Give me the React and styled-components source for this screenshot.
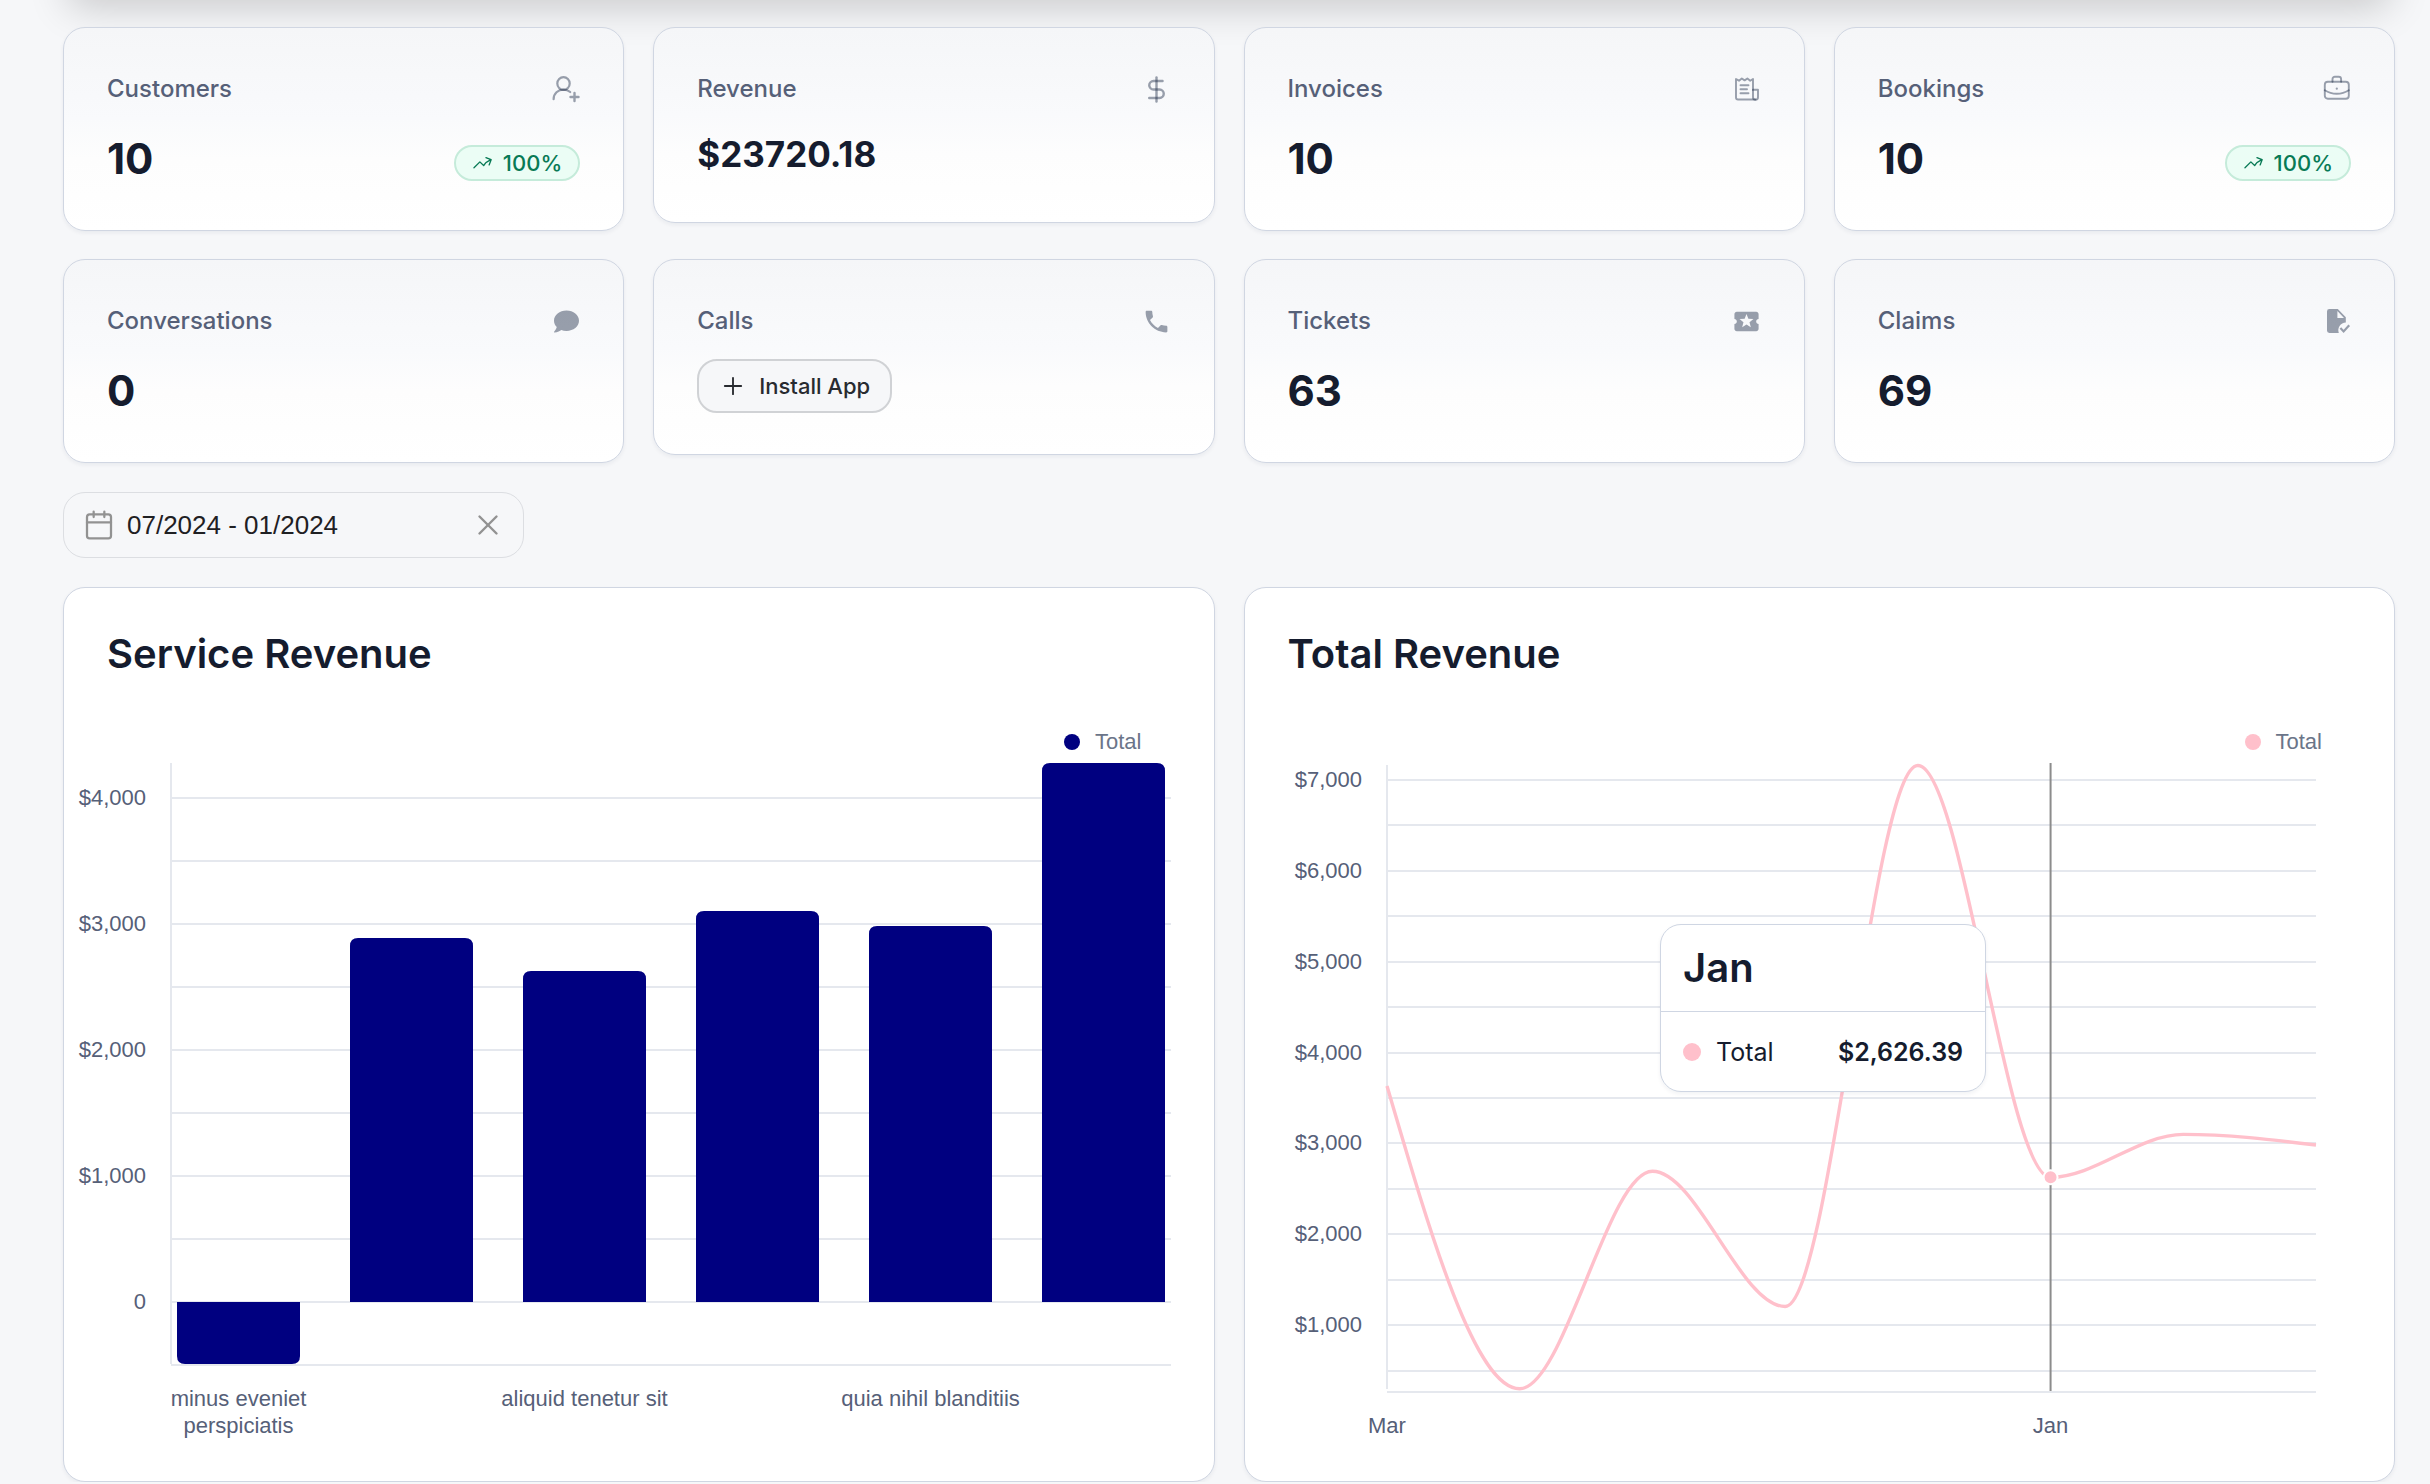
import React, { useLayoutEffect, useRef, useState } from 'react'

import styled, { createGlobalStyle } from 'styled-components'
import { Calendar, DollarSign, Plus, X } from 'lucide-react'
import { FaComment } from 'react-icons/fa'
import { HiArrowTrendingUp } from 'react-icons/hi2'
import { MdLocalPlay, MdPhone } from 'react-icons/md'

const NAVY = '#000080'
const PINK = '#ffc0cb'
const CHART_HEIGHT = 697

const serviceRevenue = [
  { name: ['minus eveniet', 'perspiciatis'], total: -490 },
  { name: [], total: 2889 },
  { name: ['aliquid tenetur sit'], total: 2626 },
  { name: [], total: 3102 },
  { name: ['quia nihil blanditiis'], total: 2985 },
  { name: [], total: 4278 },
]

const totalRevenue = [
  { name: 'Mar', total: 3632 },
  { name: '', total: 300 },
  { name: '', total: 2693 },
  { name: '', total: 1205 },
  { name: '', total: 7160 },
  { name: 'Jan', total: 2626.39 },
  { name: '', total: 3100 },
  { name: '', total: 2983 },
]

const formatTick = (value) => (value === 0 ? '0' : '$' + value.toLocaleString('en-US'))

const range = (from, to, step) => {
  const out = []
  for (let v = from; v <= to; v += step) out.push(v)
  return out
}

// current width of an element, kept up to date when the window changes
const useWidth = () => {
  const ref = useRef(null)
  const [width, setWidth] = useState(0)

  useLayoutEffect(() => {
    const measure = () => setWidth(ref.current.clientWidth)
    const observer = new ResizeObserver(measure)
    measure()
    observer.observe(ref.current)
    return () => observer.disconnect()
  }, [])

  return [ref, width]
}

// monotone cubic through the points, so the line never overshoots its data
const monotonePath = (points) => {
  const slopes = points.slice(1).map((p, i) => (p.y - points[i].y) / (p.x - points[i].x))
  const tangents = points.map((p, i) => {
    if (i === 0 || i === points.length - 1) return null
    const a = slopes[i - 1]
    const b = slopes[i]
    if (a * b <= 0) return 0
    return Math.sign(a) * 2 * Math.min(Math.abs(a), Math.abs(b), Math.abs(a + b) / 4)
  })
  const last = points.length - 1
  tangents[0] = (3 * slopes[0] - tangents[1]) / 2
  tangents[last] = (3 * slopes[last - 1] - tangents[last - 1]) / 2

  return points.reduce((d, p, i) => {
    if (i === 0) return `M${p.x},${p.y}`
    const prev = points[i - 1]
    const dx = (p.x - prev.x) / 3
    return `${d}C${prev.x + dx},${prev.y + dx * tangents[i - 1]},${p.x - dx},${p.y - dx * tangents[i]},${p.x},${p.y}`
  }, '')
}

const barPath = (x, zero, end, width) => {
  const r = end < zero ? 8 : -8
  return `M${x},${zero}V${end + r}Q${x},${end},${x + 8},${end}H${x + width - 8}Q${x + width},${end},${x + width},${end + r}V${zero}Z`
}

const UserAddIcon = () => (
  <svg width="28" height="28" viewBox="0 0 28 28" fill="none" stroke="currentColor" strokeWidth="2.200" strokeLinecap="round">
    <ellipse cx="11.5" cy="8.5" rx="6.2" ry="6.4" />
    <path d="M1.6 24.2C1.6 18.6 6 14.6 11.5 14.6c2.8 0 5 .9 6.700 2.400" />
    <path d="M22.500 18v8M18.500 22h8" strokeWidth="2.400" />
  </svg>
)

const InvoiceIcon = () => (
  <svg width="28" height="28" viewBox="0 0 28 28" fill="none" stroke="currentColor" strokeWidth="1.900" strokeLinejoin="round" strokeLinecap="round">
    <path d="M20 15V4l-2.800 1.700L14.400 3.500l-2.800 1.900-2.800-1.900L6 5.700 3 4v18.500a2 2 0 0 0 2 2h17.500" />
    <path d="M20 14.700h5v7.500a2.400 2.400 0 0 1-5 0z" />
    <path d="M7.500 10.300h8M7.500 14.300h6.500M7.500 18.300h8" />
  </svg>
)

const BriefcaseIcon = () => (
  <svg width="28" height="28" viewBox="0 0 28 28" fill="none" stroke="currentColor" strokeWidth="1.900" strokeLinejoin="round" strokeLinecap="round">
    <rect x="1.800" y="6.800" width="24" height="17" rx="3" />
    <path d="M9.500 6.800V4.200a2.400 2.400 0 0 1 2.400-2.400h3.800a2.400 2.400 0 0 1 2.400 2.400v2.600" />
    <path d="M1.800 15.200c3.600 2.300 7.600 3.500 12 3.500s8.400-1.200 12-3.500" />
    <path d="M13.800 13.600v.1" strokeWidth="2.200" />
  </svg>
)

const ClaimIcon = () => (
  <svg width="28" height="28" viewBox="0 0 28 28" fill="currentColor">
    <path fillRule="evenodd" d="M6.400 2h8.400l8 8.200v5.200a7.800 7.800 0 0 0-7 10.600H6.400A2.400 2.400 0 0 1 4 23.600V4.400A2.400 2.400 0 0 1 6.400 2zm8 2v7h6.600z" />
    <path d="M17.400 21l3.200 3.400 5.600-6.200" fill="none" stroke="currentColor" strokeWidth="2.200" />
  </svg>
)

const stats = [
  { label: 'Customers', value: '10', icon: <UserAddIcon />, growth: '100%' },
  { label: 'Revenue', value: '$23720.18', icon: <DollarSign size={29} strokeWidth={2} />, compact: true },
  { label: 'Invoices', value: '10', icon: <InvoiceIcon /> },
  { label: 'Bookings', value: '10', icon: <BriefcaseIcon />, growth: '100%' },
  { label: 'Conversations', value: '0', icon: <FaComment size={25} /> },
  { label: 'Calls', action: 'Install App', icon: <MdPhone size={29} />, compact: true },
  { label: 'Tickets', value: '63', icon: <MdLocalPlay size={29} /> },
  { label: 'Claims', value: '69', icon: <ClaimIcon /> },
]

const StatCard = ({ label, value, icon, growth, action, compact }) => (
  <Card>
    <CardHead>
      <CardLabel>{ label }</CardLabel>
      <IconBox>{ icon }</IconBox>
    </CardHead>
    <CardBody $compact={ compact }>
      { value && <Value $compact={ compact }>{ value }</Value> }
      { growth && (
        <Badge>
          <HiArrowTrendingUp size={21} />
          { growth }
        </Badge>
      ) }
      { action && (
        <InstallButton type="button">
          <Plus size={28} strokeWidth={1.6} />
          { action }
        </InstallButton>
      ) }
    </CardBody>
  </Card>
)

const YAxis = ({ ticks, x, y }) => ticks.map((tick) => (
  <AxisText key={ tick } x={ x - 25 } y={ y(tick) + 7 } textAnchor="end">{ formatTick(tick) }</AxisText>
))

const Grid = ({ values, left, right, y }) => values.map((value) => (
  <GridLine key={ value } x1={ left } x2={ right } y1={ y(value) } y2={ y(value) } />
))

const BarChart = ({ data }) => {
  const [ref, width] = useWidth()
  const left = 107
  const right = Math.max(width - 43, left)
  const top = 7
  const bottom = 608
  const min = -490
  const max = 4278
  const y = (v) => Math.round(bottom - ((v - min) / (max - min)) * (bottom - top))
  const gap = 50
  const barWidth = Math.max((right - left - 12 - gap * (data.length - 1)) / data.length, 16)

  return (
    <ChartArea ref={ ref }>
      <Svg height={ CHART_HEIGHT } role="img" aria-label="Service revenue by service">
        <Grid values={ range(0, 4000, 500) } left={ left } right={ right } y={ y } />
        <GridLine x1={ left } x2={ left } y1={ top } y2={ bottom } />
        <GridLine x1={ left } x2={ right } y1={ bottom + 1 } y2={ bottom + 1 } />
        <YAxis ticks={ range(0, 4000, 1000) } x={ left } y={ y } />
        { data.map((item, i) => {
          const x = left + 6 + i * (barWidth + gap)
          return (
            <g key={ i }>
              <path d={ barPath(x, y(0), y(item.total), barWidth) } fill={ NAVY } />
              { item.name.map((line, n) => (
                <AxisText key={ line } x={ x + barWidth / 2 } y={ 650 + n * 27 } textAnchor="middle">{ line }</AxisText>
              )) }
            </g>
          )
        }) }
      </Svg>
    </ChartArea>
  )
}

const LineChart = ({ data, active }) => {
  const [ref, width] = useWidth()
  const left = 142
  const right = Math.max(width - 79, left + 1)
  const top = 9
  const bottom = 635
  const min = 275
  const max = 7165
  const y = (v) => bottom - ((v - min) / (max - min)) * (bottom - top)
  const points = data.map((item, i) => ({
    x: left + (i * (right - left)) / (data.length - 1),
    y: y(item.total),
  }))
  const current = points[active]

  return (
    <ChartArea ref={ ref }>
      <Svg height={ CHART_HEIGHT } role="img" aria-label="Total revenue by month">
        <Grid values={ range(500, 7000, 500) } left={ left } right={ right } y={ (v) => Math.round(y(v)) } />
        <GridLine x1={ left } x2={ left } y1={ top } y2={ bottom - 2 } />
        <GridLine x1={ left } x2={ right } y1={ bottom + 1 } y2={ bottom + 1 } />
        <YAxis ticks={ range(1000, 7000, 1000) } x={ left } y={ y } />
        { data.map((item, i) => item.name && (
          <AxisText key={ i } x={ points[i].x } y={ 677 } textAnchor="middle">{ item.name }</AxisText>
        )) }
        <path d={ monotonePath(points) } fill="none" stroke={ PINK } strokeWidth="3.400" />
        <line x1={ current.x } x2={ current.x } y1={ top - 2 } y2={ bottom } stroke="#8c8c8c" strokeWidth="2" />
        <circle cx={ current.x } cy={ current.y } r="7" fill={ PINK } stroke="#fff" strokeWidth="2" />
      </Svg>
      <Tooltip style={{ left: current.x - 390 }}>
        <TooltipTitle>{ data[active].name }</TooltipTitle>
        <TooltipRow>
          <Dot $color={ PINK } $size={ 18 } />
          <span>Total</span>
          <strong>${ data[active].total.toLocaleString('en-US') }</strong>
        </TooltipRow>
      </Tooltip>
    </ChartArea>
  )
}

const ChartPanel = ({ title, color, children }) => (
  <Panel>
    <PanelTitle>{ title }</PanelTitle>
    <Legend>
      <Dot $color={ color } $size={ 16 } />
      Total
    </Legend>
    { children }
  </Panel>
)

const App = () => {
  const [dates, setDates] = useState('07/2024 - 01/2024')

  return (
    <Page>
      <GlobalStyle />
      <TopBar />
      <Content>
        <StatGrid>
          { stats.map((stat) => <StatCard key={ stat.label } { ...stat } />) }
        </StatGrid>
        <DateField>
          <Calendar size={32} strokeWidth={1.7} />
          <DateInput aria-label="Date range" value={ dates } onChange={ (e) => setDates(e.target.value) } />
          <ClearButton type="button" aria-label="Clear dates" onClick={ () => setDates('') }>
            <X size={34} strokeWidth={1.7} />
          </ClearButton>
        </DateField>
        <ChartGrid>
          <ChartPanel title="Service Revenue" color={ NAVY }>
            <BarChart data={ serviceRevenue } />
          </ChartPanel>
          <ChartPanel title="Total Revenue" color={ PINK }>
            <LineChart data={ totalRevenue } active={ 5 } />
          </ChartPanel>
        </ChartGrid>
      </Content>
    </Page>
  )
}

const GlobalStyle = createGlobalStyle`
  *, *::before, *::after {
    box-sizing: border-box;
  }

  body {
    margin: 0;
    background: #f6f7f9;
    color: #151c2e;
    font-family: Inter, "Liberation Sans", sans-serif;
  }
`

const Page = styled.main`
  padding: 0 35px 0 63px;
`

// bottom edge of the header, scrolled out of view: only its shadow shows
const TopBar = styled.div`
  height: 60px;
  margin-top: -60px;
  box-shadow: 0 12px 40px -6px rgba(0, 0, 0, 0.2);
`

const Content = styled.div`
  position: relative;
  display: flex;
  flex-direction: column;
  gap: 29px;
  padding-top: 27px;
`

const StatGrid = styled.div`
  display: grid;
  grid-template-columns: repeat(4, 1fr);
  align-items: start;
  gap: 28px 29px;
`

const Card = styled.section`
  padding: 42px 43px;
  border: 1px solid #d0d6e2;
  border-radius: 22px;
  background: linear-gradient(#f5f6f8, #f9fafc 45%, #fdfdfd 65%, #fff);
  box-shadow: 0 2px 4px rgba(20, 30, 60, 0.06);
`

const CardHead = styled.div`
  display: flex;
  align-items: center;
  justify-content: space-between;
  height: 38px;
  margin-bottom: 19px;
`

const CardLabel = styled.h3`
  margin: 0;
  color: #566078;
  font-size: 24px;
  font-weight: 500;
  line-height: 38px;
`

const IconBox = styled.span`
  display: flex;
  align-items: center;
  justify-content: center;
  width: 28px;
  height: 28px;
  color: rgba(23, 36, 66, 0.43);

  svg {
    flex: none;
  }
`

const CardBody = styled.div`
  display: flex;
  align-items: center;
  justify-content: space-between;
  height: ${({ $compact }) => ($compact ? '53px' : '61px')};
`

const Value = styled.p`
  margin: 0;
  padding-top: ${({ $compact }) => ($compact ? '0' : '2px')};
  font-size: ${({ $compact }) => ($compact ? '35px' : '42px')};
  font-weight: 700;
  line-height: 54px;
`

const Badge = styled.span`
  display: flex;
  align-items: center;
  gap: 10px;
  height: 36px;
  margin-top: 10px;
  padding: 0 16px;
  border: 2px solid #c5ebda;
  border-radius: 18px;
  background: #ebfdf5;
  color: #087a55;
  font-size: 22px;
  font-weight: 500;
`

const InstallButton = styled.button`
  display: flex;
  align-items: center;
  gap: 12px;
  height: 54px;
  padding: 0 20px;
  border: 2px solid #d0d2d5;
  border-radius: 20px;
  background: #f6f7f9;
  color: #282b30;
  font: 500 22px Inter, sans-serif;
`

const DateField = styled.div`
  display: flex;
  align-items: center;
  width: 461px;
  height: 66px;
  padding: 0 18px 0 19px;
  border: 1px solid #dcdee2;
  border-radius: 22px;
  color: #929292;
`

const DateInput = styled.input`
  flex: 1;
  min-width: 0;
  padding: 0 0 0 12px;
  border: 0;
  outline: 0;
  background: none;
  color: #1f2023;
  font: 26px "Liberation Sans", Arial, sans-serif;
`

const ClearButton = styled.button`
  display: flex;
  padding: 0;
  border: 0;
  background: none;
  color: inherit;
`

const ChartGrid = styled.div`
  display: grid;
  grid-template-columns: repeat(2, minmax(0, 1fr));
  gap: 29px;
`

const Panel = styled.section`
  padding: 43px 0 28px;
  border: 1px solid #d0d6e2;
  border-radius: 22px;
  background: #fff;
  box-shadow: 0 2px 4px rgba(20, 30, 60, 0.06);
`

const PanelTitle = styled.h2`
  margin: 0 43px 51px;
  font-size: 40px;
  font-weight: 600;
  line-height: 46px;
`

const Legend = styled.div`
  display: flex;
  align-items: center;
  justify-content: flex-end;
  gap: 15px;
  padding-right: 72px;
  color: #6b7589;
  font: 22px/28px "Liberation Sans", Arial, sans-serif;
`

const Dot = styled.i`
  width: ${({ $size }) => $size}px;
  height: ${({ $size }) => $size}px;
  border-radius: 50%;
  background: ${({ $color }) => $color};
`

const ChartArea = styled.div`
  position: relative;
`

const Svg = styled.svg`
  display: block;
  width: 100%;
`

const GridLine = styled.line`
  stroke: #e5e8ee;
  stroke-width: 2px;
`

const AxisText = styled.text`
  fill: #566078;
  font: 22px "Liberation Sans", Arial, sans-serif;
`

const Tooltip = styled.div`
  position: absolute;
  top: 168px;
  width: 326px;
  border: 1px solid #cfd6e3;
  border-radius: 21px;
  background: #fff;
  box-shadow: 0 2px 4px rgba(20, 30, 60, 0.06);
`

const TooltipTitle = styled.h4`
  margin: 0;
  padding: 0 22px;
  border-bottom: 1px solid #cfd6e3;
  font-size: 40px;
  font-weight: 600;
  line-height: 86px;
`

const TooltipRow = styled.div`
  display: flex;
  align-items: center;
  gap: 15px;
  height: 79px;
  padding: 0 22px;
  font-size: 25px;

  strong {
    margin-left: auto;
    font-weight: 600;
  }
`

export default App
